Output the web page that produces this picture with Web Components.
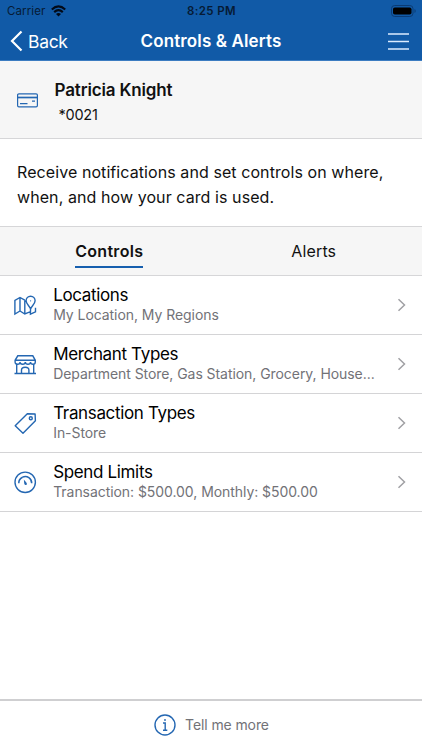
<!DOCTYPE html>
<html lang="en">
<head>
<meta charset="utf-8">
<title>Controls &amp; Alerts</title>
<style>
html, body { margin: 0; height: 100%; }
body { background: #fff; font-family: Inter, "Liberation Sans", sans-serif; color: #111; overflow: hidden; }
</style>
</head>
<body>
<card-controls-app></card-controls-app>
<script>
function define(name, html) {
  const template = document.createElement('template');
  template.innerHTML = html;
  customElements.define(name, class extends HTMLElement {
    constructor() {
      super();
      this.attachShadow({ mode: 'open' }).append(template.content.cloneNode(true));
    }
  });
}

define('status-bar', `
<style>
:host { display: grid; grid-template-columns: 1fr auto 1fr; align-items: center; height: 22px; padding: 0 6px 0 7px; color: #061a35; font-size: 11.5px; line-height: 22px; }
.left { display: flex; align-items: center; gap: 6px; letter-spacing: .1px; }
.left svg { margin-top: -1px; }
.time { font-weight: 600; letter-spacing: .35px; }
.battery { justify-self: end; margin-top: -1px; }
svg { display: block; }
</style>
<div class="left"><span>Carrier</span>
<svg width="15" height="12" viewBox="0 0 15 12" fill="none" stroke="#020a18" stroke-width="2.1"><path d="M.8 4.5Q7.5-1.6 14.2 4.5M3.2 7.1Q7.5 3.2 11.8 7.1"/><path d="M5 9Q7.5 7 10 9L7.5 11.5Z" fill="#020a18" stroke="none"/></svg></div>
<div class="time">8:25 PM</div>
<svg class="battery" width="25" height="12" viewBox="0 0 25 12"><rect x=".5" y=".5" width="21.5" height="11" rx="3.2" fill="none" stroke="#0b3c75"/><rect x="2" y="2.500" width="18.5" height="7" rx="1.8" fill="#000"/><path d="M23.5 4v4q1.2-.5 1.2-2T23.5 4z" fill="#0b3c75"/></svg>
`);

define('nav-bar', `
<style>
:host { display: grid; grid-template-columns: 1fr auto 1fr; align-items: center; height: 39px; box-sizing: border-box; padding: 0 13px 0 10px; color: #fff; border-bottom: 1px solid #3c7cc1; }
.back { display: flex; align-items: center; gap: 5px; font-size: 17.5px; letter-spacing: -.3px; }
.title { font-size: 17px; font-weight: 600; letter-spacing: .12px; padding-left: 3px; }
.menu { justify-self: end; }
svg { display: block; }
</style>
<div class="back"><svg width="13" height="22" viewBox="0 0 13 22" fill="none" stroke="#fff" stroke-width="2.2"><path d="M11.5 1.5L2 11l9.500 9.500"/></svg><span>Back</span></div>
<div class="title"><slot></slot></div>
<svg class="menu" width="21" height="17" viewBox="0 0 21 17" stroke="#dcecff" stroke-width="1.5"><path d="M0 1h21M0 8.500h21M0 16h21"/></svg>
`);

define('card-summary', `
<style>
:host { display: flex; align-items: center; height: 78px; box-sizing: border-box; padding: 0 17px; gap: 16.5px; background: #f6f6f6; border-bottom: 1px solid #d6d6d8; }
.copy { padding-top: 6px; }
.name { font-size: 17px; line-height: 24px; font-weight: 600; letter-spacing: -.15px; }
.number { font-size: 14.5px; line-height: 25px; padding-left: 4px; letter-spacing: -.25px; }
svg { display: block; margin-top: 2px; }
</style>
<svg width="21" height="15" viewBox="0 0 21 15" fill="none" stroke="#2467b2" stroke-width="1.2"><rect x=".6" y=".8" width="19.800" height="13" rx="1.3"/><path d="M.6 4.500h19.800" stroke-width="1.700"/><path d="M3 10.600h7.500M15 8.200h3"/></svg>
<div class="copy"><div class="name"><slot name="name"></slot></div><div class="number"><slot name="number"></slot></div></div>
`);

define('intro-text', `
<style>
:host { display: block; height: 87px; box-sizing: border-box; padding: 21px 16px 0 17px; font-size: 16px; line-height: 25px; letter-spacing: .08px; }
.line { white-space: nowrap; }
</style>
<div class="line"><slot name="first"></slot></div><div class="line"><slot name="second"></slot></div>
`);

define('tab-item', `
<style>
:host { display: flex; justify-content: center; align-items: center; font-size: 16px; }
span { line-height: 32px; height: 33px; box-sizing: border-box; border-bottom: 2px solid transparent; letter-spacing: .15px; }
:host([selected]) span { font-weight: 600; border-color: #165fae; letter-spacing: .3px; }
</style>
<span><slot></slot></span>
`);

define('tab-bar', `
<style>
:host { display: grid; grid-template-columns: 1fr 1fr; padding: 0 6px 0 7px; height: 50px; box-sizing: border-box; background: #f6f6f6; border: solid #d6d6d8; border-width: 1px 0; }
</style><slot></slot>
`);

define('control-row', `
<style>
:host { display: flex; align-items: center; height: 59px; box-sizing: border-box; border-bottom: 1px solid #d4d4d6; padding: 0 16px 0 13px; }
.icon { width: 24px; height: 24px; flex: none; }
.copy { flex: 1; min-width: 0; margin-left: 16.2px; }
.title { font-size: 17px; line-height: 21px; letter-spacing: -.35px; color: #000; }
.detail { font-size: 14px; line-height: 17px; padding-bottom: 3px; letter-spacing: -.06px; color: #727277; white-space: nowrap; }
svg { display: block; }
</style>
<div class="icon"><slot name="icon"></slot></div>
<div class="copy"><div class="title"><slot name="title"></slot></div><div class="detail"><slot name="detail"></slot></div></div>
<svg width="9" height="14" viewBox="0 0 9 14" fill="none" stroke="#a0a0a4" stroke-width="1.5"><path d="M1.500 1.200L7.500 7l-6 5.800"/></svg>
`);

const glyphs = {
  map: '<path d="M11.800 7.200L7 4.500 1.900 7.500V21l5.100-3 4.800 3 5.600-2.300 0 2.500 5.100-2.400v-4M7 4.500V18M11.800 7.200V21M17.600 16c-.8-2.600-4.500-5-4.500-8.200a4.500 4.500 0 1 1 9 0c0 3.200-3.700 5.600-4.500 8.200zM17.500 16v3"/><circle cx="17.600" cy="7.800" r=".6" fill="currentColor" stroke="none"/>',
  store: '<path d="M4.800 3.800h15l2.500 4.500v1.700q0 2.200-2.300 2.200t-2.500-2.200q0 2.200-2.500 2.200t-2.700-2.200q0 2.200-2.700 2.200t-2.500-2.200q0 2.200-2.500 2.200t-2.500-2.200v-1.700zM2 8.300h20.300M3.700 12.300v9M20.700 12.300v9M1.500 21.500h21.500M8.500 21.500v-3.400q0-2.800 3.700-2.800t3.700 2.800v3.400"/>',
  tag: '<path d="M14.300 2.800l7.800.2.300 6.800L10 22.300 2.200 14.800z" stroke-linejoin="round"/><circle cx="17.800" cy="7.200" r="1.500"/>',
  gauge: '<circle cx="12.200" cy="12.300" r="10.200"/><path d="M5.800 13.300a6.400 6.400 0 0 1 3.700-6.100M9.500 7.200a6.400 6.400 0 0 1 9.200 6.100" stroke-width="1.500"/><path d="M10.800 9.500l2.900 3.400q.7 1.700-.7 2.100-1.300.2-1.700-1.300z" fill="currentColor" stroke="none"/>'
};
customElements.define('line-icon', class extends HTMLElement {
  constructor() { super(); this.attachShadow({ mode: 'open' }); }
  connectedCallback() {
    this.shadowRoot.innerHTML = `<style>:host{display:block;color:#2467b2}svg{display:block}</style><svg width="24" height="24" viewBox="0 0 24 24" fill="none" stroke="currentColor" stroke-width="1.400">${glyphs[this.getAttribute('name')]}</svg>`;
  }
});

define('info-footer', `
<style>
:host { display: flex; align-items: center; justify-content: center; gap: 9px; height: 51px; box-sizing: border-box; padding: 0 0 2px 1px; border-top: 2px solid #cfcfd1; font-size: 14px; letter-spacing: -.1px; color: #727277; }
svg { display: block; }
</style>
<svg width="22" height="22" viewBox="0 0 22 22" fill="none" stroke="#2467b2" stroke-width="1.400"><circle cx="11" cy="11" r="10"/><path d="M9 9h2.200v7M9 16.200h4.300"/><circle cx="11" cy="6" r=".9" fill="#2467b2" stroke="none"/></svg>
<span class="label"><slot></slot></span>
`);

define('card-controls-app', `
<style>
:host { display: flex; flex-direction: column; height: 750px; }
.header { background: #115aa7; }
main { flex: 1; }
</style>
<div class="header"><status-bar></status-bar><nav-bar>Controls &amp; Alerts</nav-bar></div>
<card-summary><span slot="name">Patricia Knight</span><span slot="number">*0021</span></card-summary>
<intro-text><span slot="first">Receive notifications and set controls on where,</span><span slot="second">when, and how your card is used.</span></intro-text>
<tab-bar><tab-item selected>Controls</tab-item><tab-item>Alerts</tab-item></tab-bar>
<main>
<control-row><line-icon slot="icon" name="map"></line-icon><span slot="title">Locations</span><span slot="detail">My Location, My Regions</span></control-row>
<control-row><line-icon slot="icon" name="store"></line-icon><span slot="title">Merchant Types</span><span slot="detail">Department Store, Gas Station, Grocery, House...</span></control-row>
<control-row><line-icon slot="icon" name="tag"></line-icon><span slot="title">Transaction Types</span><span slot="detail">In-Store</span></control-row>
<control-row><line-icon slot="icon" name="gauge"></line-icon><span slot="title">Spend Limits</span><span slot="detail">Transaction: $500.00, Monthly: $500.00</span></control-row>
</main>
<info-footer>Tell me more</info-footer>
`);
</script>
</body>
</html>
